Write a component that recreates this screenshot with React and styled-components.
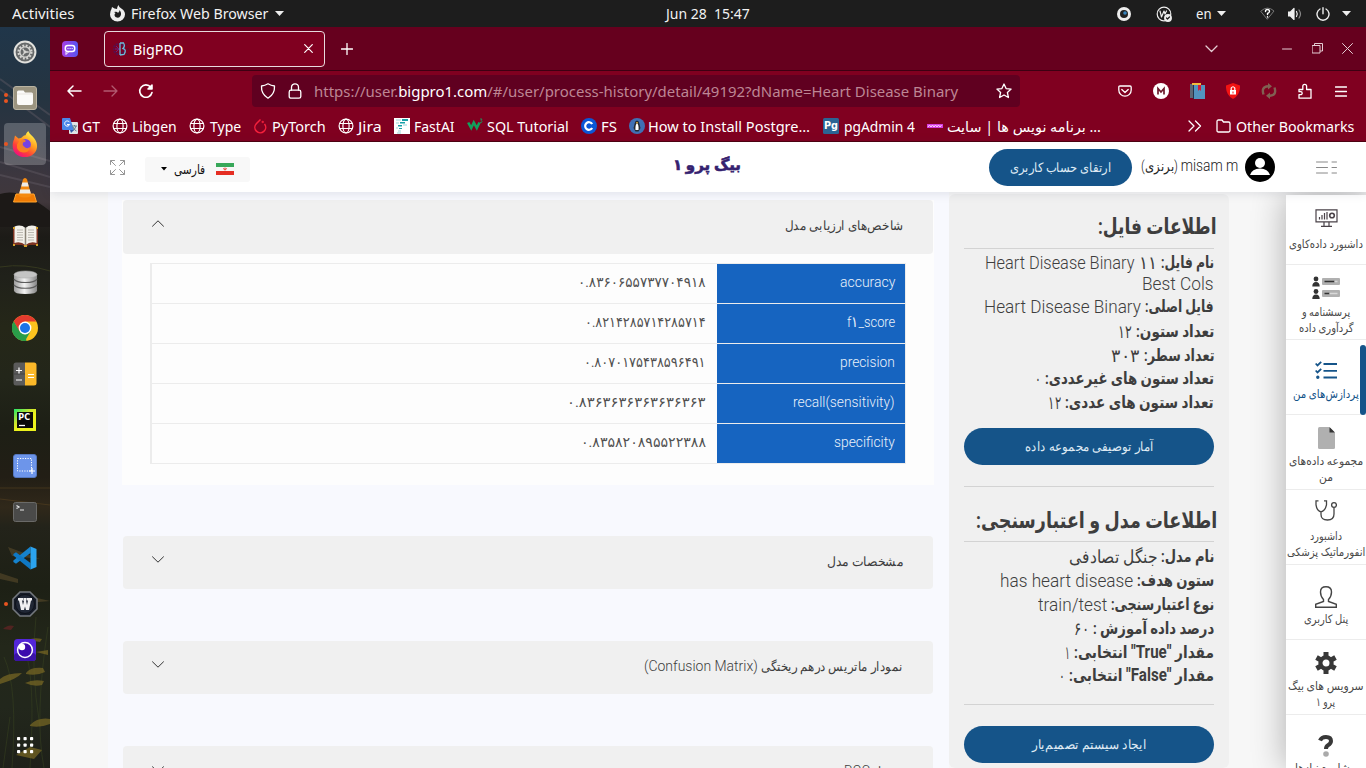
import React, { useLayoutEffect, useRef, useState } from "react";
import styled, { createGlobalStyle } from "styled-components";

const Global = createGlobalStyle`
  * { box-sizing: border-box; }
  html, body { margin: 0; width: 1366px; height: 768px; overflow: hidden; }
  body { font-family: "Noto Sans", "DejaVu Sans", sans-serif; background: #f7f7f7; }
  svg { display: block; flex: none; }
`;

/* ---------- text fitted to a given width ---------- */
const FitBox = styled.span`
  display: inline-flex;
  flex: none;
  width: ${(p) => p.$w}px;
  white-space: pre;
  direction: ${(p) => (p.$rtl ? "rtl" : "ltr")};
`;
const FitInner = styled.span`
  display: inline-block;
  flex: none;
  transform-origin: ${(p) => (p.$rtl ? "100% 50%" : "0 50%")};
`;
function Fit({ w, rtl, children }) {
  const ref = useRef(null);
  const [scale, setScale] = useState(1);
  useLayoutEffect(() => {
    setScale(w / ref.current.offsetWidth);
  }, [w, children]);
  return (
    <FitBox $w={w} $rtl={rtl}>
      <FitInner ref={ref} $rtl={rtl} style={{ transform: `scaleX(${scale})` }}>{children}</FitInner>
    </FitBox>
  );
}
/* Latin words inside Persian text */
const Latin = styled.span`
  font-size: ${(p) => p.$size || 1.18}em;
  line-height: 0;
`;

/* ---------- desktop ---------- */
const Desktop = styled.div`
  width: 1366px;
  height: 768px;
  display: flex;
  flex-direction: column;
  overflow: hidden;
`;
const TopBar = styled.div`
  height: 27px;
  flex: none;
  display: flex;
  align-items: center;
  background: #1d1d1d;
  color: #f2f2f2;
  font-size: 14px;
  line-height: 27px;
  padding-left: 12px;
`;
const Gap = styled.span`
  flex: none;
  width: ${(p) => p.$w}px;
`;
const Below = styled.div`
  flex: 1;
  display: flex;
  min-height: 0;
`;

/* ---------- dock ---------- */
const Dock = styled.div`
  width: 50px;
  flex: none;
  position: relative;
  display: flex;
  flex-direction: column;
  padding-top: 2px;
  overflow: hidden;
  background: linear-gradient(#20364a 0, #253441 70px, #2e3440 110px, #3d373f 150px, #40373b 175px, #23201d 195px, #1c1b17 210px, #20211a 250px, #252718 300px, #23261a 350px, #1d1f15 400px, #221e15 450px, #30281a 480px, #23231a 500px, #1d2015 560px, #23271a 620px, #22271c 680px, #1e2019 741px);
`;
const Wallpaper = styled.svg`
  position: absolute;
  inset: 0;
`;
const DockItem = styled.div`
  height: 46px;
  flex: none;
  position: relative;
  display: flex;
  align-items: center;
  justify-content: center;
  margin-top: ${(p) => (p.$bottom ? "auto" : "0")};
  &::before {
    content: "";
    position: absolute;
    inset: 2px 4px;
    border-radius: 4px;
    background: ${(p) => (p.$active ? "rgba(255,255,255,.22)" : "transparent")};
  }
  svg { position: relative; }
`;
const Dots = styled.span`
  position: absolute;
  left: 4px;
  top: 21px;
  width: 4px;
  display: flex;
  flex-direction: column;
  gap: 2px;
  margin-top: ${(p) => (p.$two ? "-3px" : "0")};
  i { width: 4px; height: 4px; border-radius: 2px; background: #e95420; }
`;

const DockIcons = {
  settings: (
    <svg width="24" height="24" viewBox="0 0 26 26">
      <circle cx="13" cy="13" r="11.3" fill="#66696a" stroke="#e2e2de" strokeWidth="2.2" />
      <circle cx="13" cy="13" r="7" fill="none" stroke="#d5d5d2" strokeWidth="2.4" strokeDasharray="2 1.66" />
      <circle cx="13" cy="13" r="5.6" fill="none" stroke="#d5d5d2" strokeWidth="1.5" />
      <path d="M13 13h4M13 13l-2.5-3.6M13 13l-2.5 3.6" stroke="#d5d5d2" strokeWidth="1.4" />
      <circle cx="13" cy="13" r="1.6" fill="#d5d5d2" />
    </svg>
  ),
  files: (
    <svg width="24" height="24" viewBox="0 0 24 24">
      <rect x=".5" y=".5" width="23" height="23" rx="2.5" fill="#9b9480" stroke="#b9b3a1" />
      <path d="M4 6q0-1.5 1.500-1.500h5l1.500 2h6.500q1.500 0 1.500 1.500v9q0 2-2 2h-12q-2 0-2-2z" fill="#fbfaf8" />
      <path d="M4 8h16" stroke="#ddd9d0" strokeWidth=".6" />
    </svg>
  ),
  firefox: (
    <svg width="26" height="26" viewBox="0 0 26 26">
      <defs>
        <linearGradient id="ffa" x1=".8" y1=".1" x2=".25" y2=".95">
          <stop offset="0" stopColor="#fff14a" /><stop offset=".4" stopColor="#ff9a1e" /><stop offset=".72" stopColor="#ff4138" /><stop offset="1" stopColor="#f0117c" />
        </linearGradient>
      </defs>
      <path d="M16.500.5c1 2.500 3.500 4 5.500 6.500 4 5 4 11 .5 15-5 5.500-14 5.500-19 .5C0 19 0 12.500 2 8.500l1-4 3.500 3 2.500-.5 3-2.500q2 0 2-1.500 1-2 2.500-3z" fill="url(#ffa)" />
      <circle cx="13.300" cy="13.500" r="5.600" fill="#7542e5" />
      <path d="M8 9q4-2 6 1-1 1-3 1.500-1 2 1 4 3 3 6 .5-1 6-7 5.500-7-1-6-8z" fill="#ff8a16" opacity=".85" />
    </svg>
  ),
  vlc: (
    <svg width="24" height="26" viewBox="0 0 24 26">
      <path d="M3 17h18l2.500 8H.5z" fill="#f07c05" stroke="#ffa52f" />
      <path d="M12 1q1.500 0 2 1.500L18.500 19q-6.500 3-13 0L10 2.500Q10.500 1 12 1z" fill="#f58a10" />
      <path d="M9.300 5.500h5.400l1 4H8.300zM7.200 12.500h9.600l1 4H6.200z" fill="#eeece8" />
    </svg>
  ),
  book: (
    <svg width="27" height="24" viewBox="0 0 27 24">
      <path d="M1 4h25v17h-9l-3.500 2-3.500-2H1z" fill="#7d3322" />
      <path d="M2.500 2.500Q9 0 13.500 4 18 0 24.500 2.500V19q-6-2-11 2-5-4-11-2z" fill="#f2f0ea" />
      <path d="M13.500 4v17" stroke="#8b8579" strokeWidth="1.500" />
      <path d="M5 6h6M5 8.500h6M5 11h6M5 13.500h6M5 16h6M16 6h6M16 8.500h6M16 11h6M16 13.500h6M16 16h6" stroke="#b4b1aa" strokeWidth=".9" />
      <path d="M1 4h2M1 21h2M24 4h2M24 21h2M12 22h3" stroke="#d2a12d" strokeWidth="2" />
    </svg>
  ),
  db: (
    <svg width="25" height="25" viewBox="0 0 26 26">
      <defs><linearGradient id="dbg"><stop offset="0" stopColor="#9c9c9c" /><stop offset=".45" stopColor="#f3f3f3" /><stop offset="1" stopColor="#858585" /></linearGradient></defs>
      <path d="M1 5v16q0 4 12 4t12-4V5z" fill="url(#dbg)" />
      <ellipse cx="13" cy="4.700" rx="12" ry="3.700" fill="#c4c4c4" stroke="#aaa" strokeWidth=".6" />
      <path d="M1 9.500q2 3.500 12 3.500t12-3.500M1 15.500Q3 19 13 19t12-3.500" fill="none" stroke="#5d5d5d" strokeWidth="1.200" />
    </svg>
  ),
  chrome: (
    <svg width="26" height="26" viewBox="0 0 26 26">
      <circle cx="13" cy="13" r="13" fill="#fcc31e" />
      <path d="M13 26A13 13 0 0 1 1.740 6.500L7.400 16.200 13 19.500l1.500 6.400z" fill="#2a9d49" />
      <path d="M1.740 6.500A13 13 0 0 1 24.260 6.500H13L7.400 16.200z" fill="#e33b2e" />
      <path d="M1.740 6.500L7.400 16.200q2 3.300 5.600 3.300l5.600-3.200L13 26A13 13 0 0 1 1.740 6.500z" fill="#2a9d49" />
      <circle cx="13" cy="13" r="6.400" fill="#fff" /><circle cx="13" cy="13" r="5" fill="#1b74e8" />
    </svg>
  ),
  calc: (
    <svg width="24" height="24" viewBox="0 0 24 24">
      <path d="M3 .5h9v23H3Q.5 23.500.5 21V3Q.5.5 3 .5z" fill="#5b5b5b" />
      <path d="M12 .5h9q2.500 0 2.500 2.500v18q0 2.500-2.500 2.500h-9z" fill="#fbb829" />
      <path d="M.5 12H12" stroke="#444" />
      <path d="M3 8.500h6M6 5.500v6M3 18h6M15 12.500h6M15 15.500h6" stroke="#fff" strokeWidth="1.200" />
    </svg>
  ),
  pycharm: (
    <svg width="22" height="22" viewBox="0 0 22 22">
      <defs><linearGradient id="pcg" x2=".5" y2=".6"><stop offset="0" stopColor="#21e66b" /><stop offset=".7" stopColor="#cfe52c" /><stop offset="1" stopColor="#ecf21d" /></linearGradient></defs>
      <rect width="22" height="22" fill="url(#pcg)" /><rect x="3" y="3" width="16" height="16" fill="#0a0a0a" />
      <path d="M5 16.500h6" stroke="#fff" strokeWidth="1.300" />
      <text x="4.300" y="11" fontSize="8" fontWeight="700" fill="#fff" fontFamily="DejaVu Sans">PC</text>
    </svg>
  ),
  shot: (
    <svg width="24" height="24" viewBox="0 0 24 24">
      <rect x=".5" y=".5" width="23" height="23" rx="2.500" fill="#6d95ea" stroke="#5476bd" />
      <rect x="4.500" y="4.500" width="14" height="12.500" fill="none" stroke="#fff" strokeDasharray="1.200 1.300" />
      <path d="M16 17h6M19 14v6" stroke="#fff" strokeWidth="1.200" />
    </svg>
  ),
  term: (
    <svg width="24" height="20" viewBox="0 0 24 20">
      <rect x=".5" y=".5" width="23" height="19" rx="2" fill="#4a4a49" stroke="#6a6a68" />
      <path d="M3.500 3.500L6 5 3.500 6.500M7 8h4" fill="none" stroke="#e8e8e8" strokeWidth="1.200" />
    </svg>
  ),
  code: (
    <svg width="24" height="24" viewBox="0 0 24 24">
      <path d="M17.500.5v6.500L3 17.800.4 16V14.500z" fill="#1683cd" />
      <path d="M.4 8L3 6.200 17.500 17v6.500L.4 9.500z" fill="#0f78c4" />
      <path d="M17.500.5L23.500 3v18l-6 2.500z" fill="#2ba3ee" />
    </svg>
  ),
  wapp: (
    <svg width="26" height="26" viewBox="0 0 26 26">
      <path d="M8 1h10l7 7v10l-7 7H8l-7-7V8z" fill="#161c28" stroke="#73777d" strokeWidth="1.600" />
      <circle cx="13" cy="13" r="9.500" fill="#202735" stroke="#0d1119" />
      <path d="M6 7h5v2.500h-1L11 14l1-4h-.6V7h3.200v2.500H14l1 4.500 1-4.500h-1V7h5v2.500h-1L17 19h-3l-1-3.500-1 3.500H9L7 9.500H6z" fill="#f0f0f2" />
    </svg>
  ),
  purple: (
    <svg width="22" height="22" viewBox="0 0 22 22">
      <rect width="22" height="22" rx="3.500" fill="#5326d8" /><rect y="14" width="22" height="8" rx="3.500" fill="#3b13a7" />
      <circle cx="11" cy="11" r="7.400" fill="#3b0bad" stroke="#fff" strokeWidth="1.500" />
      <circle cx="8" cy="8" r="3.200" fill="#fff" />
    </svg>
  ),
  apps: (
    <svg width="18" height="18" viewBox="0 0 18 18" fill="#fff">
      {[1, 7.500, 14].map((y) => [1, 7.500, 14].map((x) => <rect key={`${x}-${y}`} x={x} y={y} width="3.200" height="3.200" rx=".8" />))}
    </svg>
  ),
};
const dockItems = [
  ["settings"], ["files", 2], ["firefox", 1, true], ["vlc"], ["book"], ["db"], ["chrome"], ["calc"],
  ["pycharm"], ["shot"], ["term"], ["code"], ["wapp", 1], ["purple"],
];
function DockBar() {
  return (
    <Dock>
      <Wallpaper width="50" height="741" viewBox="0 0 50 741">
        <g stroke="#66606a" strokeWidth="2" opacity=".4" fill="none">
          <path d="M0 52L50 88M0 62L50 100M0 120L50 134M0 135L50 150M0 148L50 160" />
        </g>
        <path d="M0 167Q20 160 50 184V200H0z" fill="#1c1917" />
        <path d="M0 240Q25 236 50 244" stroke="#35381f" fill="none" />
        <path d="M0 461H50M0 472L50 478" stroke="#554020" opacity=".6" />
        <g stroke="#36401f" fill="none" opacity=".6">
          <path d="M12 741Q18 660 4 630M30 741Q36 650 24 620M44 741Q34 690 48 600M3 741L10 690M40 700Q30 640 36 590" />
        </g>
        <g fill="#7b6a24" opacity=".7">
          <path d="M0 808q8-8 22-7-5 7-22 12z" />
          <path d="M0 652q6-6 22-6-5 6-22 11zM26 646q4-6 17-5l2 4q-8 4-19 2zM25 656q8-4 19-2l-2 4q-8 2-17-2zM30 698q8-8 20-6v5q-10 4-20 2zM28 613q6-3 14-1l-2 3zM36 625l12-2v5zM16 728l14-8 12 3-8 9z" />
        </g>
        <g fill="#756034" opacity=".4"><path d="M0 546l18 6v4L0 552zM8 520l32 12-28-3zM24 568l26 6-22 2z" /></g>
        <path d="M3 602q5-5 11-3l-3 4z" fill="#712326" opacity=".6" />
      </Wallpaper>
      {dockItems.map(([name, dots, active]) => (
        <DockItem key={name} $active={active}>
          {dots && <Dots $two={dots === 2}><i />{dots === 2 && <i />}</Dots>}
          {DockIcons[name]}
        </DockItem>
      ))}
      <DockItem $bottom>{DockIcons.apps}</DockItem>
    </Dock>
  );
}

/* ---------- browser ---------- */
const Browser = styled.div`
  flex: 1;
  min-width: 0;
  display: flex;
  flex-direction: column;
  color: #fff;
  font-size: 14px;
`;
const TabStrip = styled.div`
  height: 44px;
  flex: none;
  display: flex;
  align-items: center;
  background: #66001e;
  border-bottom: 1px solid #3d0012;
  padding-left: 12px;
`;
const Tab = styled.div`
  width: 221px;
  height: 36px;
  flex: none;
  display: flex;
  align-items: center;
  padding-left: 8px;
  gap: 4px;
  background: #800020;
  border: 1px solid #e8dadd;
  border-radius: 4px;
  > span { padding-top: 2px; }
`;
const NavBar = styled.div`
  height: 40px;
  flex: none;
  display: flex;
  align-items: center;
  background: #800020;
  padding-left: 16px;
`;
const UrlBox = styled.div`
  width: 768px;
  height: 32px;
  flex: none;
  display: flex;
  align-items: center;
  padding-left: 8px;
  border-radius: 4px;
  background: #600020;
  color: #bd8694;
  font-size: 15px;
  b { font-weight: 400; color: #fff; }
`;
const Bookmarks = styled.div`
  height: 31px;
  flex: none;
  display: flex;
  align-items: center;
  background: #800020;
  border-bottom: 1px solid #50000f;
  padding-left: 12px;
`;
const Bookmark = styled.div`
  flex: none;
  display: flex;
  align-items: center;
  gap: ${(p) => p.$gap}px;
  margin-right: ${(p) => p.$after}px;
`;

const Globe = () => (
  <svg width="16" height="16" viewBox="0 0 16 16" fill="none" stroke="#fff" strokeWidth="1.200">
    <circle cx="8" cy="8" r="6.900" /><ellipse cx="8" cy="8" rx="3.100" ry="6.900" /><path d="M1.500 5.500h13M1.500 10.500h13" />
  </svg>
);
const bookmarkIcons = {
  gt: (
    <svg width="16" height="16" viewBox="0 0 16 16">
      <rect x="7" y="4" width="9" height="12" rx="1" fill="#dfe3e6" /><path d="M0 1q0-1 1-1h7l4 12H1q-1 0-1-1z" fill="#4a86e8" />
      <path d="M7.500 4.200A2.600 2.600 0 1 0 7.700 6.500H5" stroke="#fff" fill="none" /><path d="M10 8h5M12.500 7v1M14 8q-1 4-4 5M11 9q1 3 3.500 4" stroke="#607d8b" fill="none" /><path d="M8 12h4l-3 3z" fill="#3056a5" />
    </svg>
  ),
  globe: <Globe />,
  torch: (
    <svg width="15" height="16" viewBox="0 0 15 16" fill="none" stroke="#f5203c" strokeWidth="1.500">
      <path d="M7.500 1.500L3.300 5.700a5.400 5.400 0 1 0 8.200.3" /><circle cx="9.700" cy="4" r=".4" />
    </svg>
  ),
  fast: (
    <svg width="16" height="16" viewBox="0 0 16 16">
      <rect width="16" height="16" fill="#fff" /><path d="M8 1h6v2H8zM6 4h5v1.500H6zM4 7h4v1.500H4zM5 10h3v1H5z" fill="#18a0a8" /><path d="M2 2h5M2 5h3M9 7h4M2 10h2M4 13h3M3 15h4" stroke="#98d8da" strokeWidth="1.200" />
    </svg>
  ),
  w3: (
    <svg width="16" height="16" viewBox="0 0 16 16" fill="none">
      <path d="M1.200 4.500l3 5.500 2.600-5.500 3 5.500L12.500 4.500" stroke="#12a05c" strokeWidth="2.600" /><path d="M13 1h2l-1 1.500q2 .5.500 2H13" stroke="#12a05c" strokeWidth=".8" />
    </svg>
  ),
  fs: (
    <svg width="16" height="16" viewBox="0 0 16 16"><circle cx="8" cy="8" r="8" fill="#0b57d6" /><path d="M11.200 6A3.800 3.800 0 1 0 11.200 10" fill="none" stroke="#fff" strokeWidth="2.200" /></svg>
  ),
  pen: (
    <svg width="16" height="16" viewBox="0 0 16 16"><circle cx="8" cy="8" r="8" fill="#4070b4" /><path d="M8 2.500q2 0 2.200 2.500l1.300 5-2 3.500h-3l-2-3.500 1.300-5Q6 2.500 8 2.500z" fill="#242b33" /><path d="M8 5q2 2 1.500 7h-3Q6 7 8 5z" fill="#fff" /><path d="M7 4h2l-1 2z" fill="#f2b32b" /></svg>
  ),
  pg: (
    <svg width="16" height="16" viewBox="0 0 16 16"><rect width="16" height="16" rx="1.500" fill="#2b6494" /><text x="1" y="11" fontSize="10" fontWeight="700" fill="#fff" fontFamily="DejaVu Sans" textLength="14" lengthAdjust="spacingAndGlyphs">Pg</text></svg>
  ),
  pink: (
    <svg width="16" height="16" viewBox="0 0 16 16"><path d="M0 6h16v4H0z" fill="#d63de0" /><path d="M1 9l1.500-2L4 9l1.500-2L7 9l1.500-2L10 9l1.500-2L13 9l1.500-2" stroke="#ffd7ff" fill="none" /></svg>
  ),
};
const bookmarks = [
  ["gt", 4, "GT", 18, 12], ["globe", 4, "Libgen", 45, 12], ["globe", 5, "Type", 31, 12], ["torch", 4, "PyTorch", 54, 12],
  ["globe", 4, "Jira", 24, 12], ["fast", 4, "FastAI", 41, 12], ["w3", 4, "SQL Tutorial", 82, 12], ["fs", 4, "FS", 16, 12],
  ["pen", 3, "How to Install Postgre…", 162, 13], ["pg", 5, "pgAdmin 4", 71, 12], ["pink", 4, "برنامه نویس ها | سایت …", 154, 87],
];

const Svg = styled.svg`
  margin-right: ${(p) => p.$after || 0}px;
  fill: none;
  stroke: ${(p) => p.$color || "#fff"};
  stroke-width: ${(p) => p.$sw || 1.3};
  stroke-linecap: round;
  stroke-linejoin: round;
`;

/* ---------- site ---------- */
const Site = styled.div`
  flex: 1;
  min-height: 0;
  display: flex;
  flex-direction: column;
  background: #f7f7f7;
  color: #3e3e3e;
  font-family: Roboto, "DejaVu Sans", sans-serif;
`;
const SiteHeader = styled.header`
  height: 50px;
  flex: none;
  display: flex;
  align-items: center;
  position: relative;
  z-index: 2;
  background: #fff;
  box-shadow: 0 1px 10px rgba(40, 45, 80, 0.13);
  padding-left: 60px;
  font-size: 14px;
`;
const LangButton = styled.div`
  width: 105px;
  height: 25px;
  margin: 4px 423px 0 20px;
  padding-left: 16px;
  display: flex;
  align-items: center;
  border-radius: 3px;
  background: #f8f8f8;
  color: #111;
  font-size: 13px;
`;
const Logo = styled.div`
  width: 68px;
  margin-right: 248px;
  color: #35216f;
  font-size: 15px;
  font-weight: 900;
  line-height: 20px;
  margin-top: -4px;
  -webkit-text-stroke: 0.6px #35216f;
`;
const Pill = styled.button`
  width: ${(p) => p.$w}px;
  height: 37px;
  flex: none;
  padding: 0;
  border: 0;
  border-radius: 19px;
  display: flex;
  align-items: center;
  justify-content: center;
  background: #155489;
  color: #dfeaf4;
  font: 300 13px Roboto, "DejaVu Sans", sans-serif;
  margin: ${(p) => p.$m || "0"};
`;
const User = styled.div`
  margin: -2px 7px 0 9px;
  font-size: 14px;
  font-weight: 300;
  color: #222;
`;
const SiteBody = styled.div`
  flex: 1;
  min-height: 0;
  display: flex;
  overflow: hidden;
`;
const Main = styled.main`
  width: 841px;
  flex: none;
  margin-left: 58px;
  padding: 8px 15px 0 14px;
  display: flex;
  flex-direction: column;
  background: #f8f9fe;
  overflow: hidden;
`;
const Accordion = styled.section`
  flex: none;
  margin-bottom: ${(p) => p.$after}px;
  background: ${(p) => (p.$open ? "#fdfdfd" : "transparent")};
  height: ${(p) => p.$h}px;
`;
const AccHead = styled.div`
  height: ${(p) => (p.$open ? 54 : 53)}px;
  margin: 0 1px;
  padding: 0 30px 0 29px;
  display: flex;
  align-items: center;
  justify-content: space-between;
  border-radius: 4px;
  background: #f0f0f0;
  font-size: 13px;
  font-weight: 300;
  > svg { margin-top: -7px; }
  > span { margin-top: -3px; }
`;
const Table = styled.div`
  width: 756px;
  margin: 9px 0 0 28px;
  border: 1px solid #ececec;
  border-left-width: 2px;
  border-bottom: 0;
`;
const Row = styled.div`
  height: 40.1px;
  display: flex;
  direction: rtl;
  border-bottom: 1px solid #ececec;
`;
const Key = styled.div`
  width: 188px;
  padding-right: 10px;
  display: flex;
  align-items: center;
  background: #1664c0;
  color: #eaf1fa;
  font-size: 14.500px;
  font-weight: 300;
  padding-bottom: 2px;
`;
const Value = styled.div`
  flex: 1;
  padding: 0 11px 3px 0;
  display: flex;
  align-items: center;
  font-size: 14px;
  color: #505050;
`;
const Info = styled.aside`
  width: 280px;
  flex: none;
  margin-top: 2px;
  padding: 0 15px;
  direction: rtl;
  border-radius: 6px;
  background: #f0f0f0;
  overflow: hidden;
`;
const InfoTitle = styled.h3`
  margin: 0 -3px;
  height: ${(p) => p.$h}px;
  padding-top: ${(p) => p.$pt}px;
  font-size: 22px;
  line-height: 26px;
  font-weight: 700;
`;
const InfoSpace = styled.div`
  height: 21px;
`;
const Rule = styled.hr`
  height: 1px;
  border: 0;
  margin: 0;
  background: #d3d3d3;
`;
const Lines = styled.div`
  height: ${(p) => p.$h}px;
  padding-top: ${(p) => p.$pt}px;
`;
const Line = styled.div`
  height: ${(p) => p.$h || 23.8}px;
  display: flex;
  align-items: center;
  gap: 4px;
  font-size: 16.500px;
  line-height: 22px;
  b { font-weight: 700; }
  i { font-style: normal; font-weight: 300; font-size: 17.500px; }
`;
const Side = styled.nav`
  width: 80px;
  flex: none;
  margin: 3px 0 0 57px;
  display: flex;
  flex-direction: column;
  background: #fff;
  box-shadow: 0 0 34px rgba(0, 0, 0, 0.3);
`;
const SideItem = styled.div`
  height: ${(p) => p.$h || 75}px;
  flex: none;
  position: relative;
  padding-top: ${(p) => p.$top}px;
  display: flex;
  flex-direction: column;
  align-items: center;
  border-bottom: 1px solid #ececec;
  color: ${(p) => (p.$active ? "#155489" : "#4a4a4a")};
  font-size: 11.500px;
  line-height: 16px;
  svg { margin-bottom: ${(p) => p.$gap}px; }
`;
const ActiveBar = styled.span`
  position: absolute;
  right: 0;
  top: 5px;
  width: 6px;
  height: 70px;
  border-radius: 3px;
  background: #155489;
`;

const metrics = [
  ["accuracy", 55, "۰.۸۳۶۰۶۵۵۷۳۷۷۰۴۹۱۸", 128],
  ["f۱_score", 48, "۰.۸۲۱۴۲۸۵۷۱۴۲۸۵۷۱۴", 121],
  ["precision", 55, "۰.۸۰۷۰۱۷۵۴۳۸۵۹۶۴۹۱", 122],
  ["recall(sensitivity)", 102, "۰.۸۳۶۳۶۳۶۳۶۳۶۳۶۳۶۳", 139],
  ["specificity", 61, "۰.۸۳۵۸۲۰۸۹۵۵۲۲۳۸۸", 125],
];
const fileInfo = [
  ["نام فایل:", 53, "Heart Disease Binary ۱۱", 172, 22.5],
  [null, 0, "Best Cols", 72, 20],
  ["فایل اصلی:", 69, "Heart Disease Binary", 157, 26],
  ["تعداد ستون:", 78, "۱۲", 14],
  ["تعداد سطر:", 70, "۳۰۳", 29],
  ["تعداد ستون های غیرعددی:", 169, "۰", 6],
  ["تعداد ستون های عددی:", 149, "۱۲", 13],
];
const modelInfo = [
  ["نام مدل:", 53, "جنگل تصادفی", 88, 0, true],
  ["ستون هدف:", 77, "has heart disease", 133],
  ["نوع اعتبارسنجی:", 103, "train/test", 69],
  ["درصد داده آموزش :", 121, "۶۰", 15],
  [<>مقدار <Latin $size={1.1}>"True"</Latin> انتخابی:</>, 140, "۱", 5],
  [<>مقدار <Latin $size={1.1}>"False"</Latin> انتخابی:</>, 145, "۰", 6],
];
const InfoLines = ({ rows, h, pt }) => (
  <Lines $h={h} $pt={pt}>
    {rows.map(([label, lw, value, vw, lh, rtl], i) => (
      <Line key={i} $h={lh}>
        {label && <b><Fit w={lw} rtl>{label}</Fit></b>}
        <i><Fit w={vw} rtl={rtl}>{value}</Fit></i>
      </Line>
    ))}
  </Lines>
);
const Chevron = ({ up }) => (
  <Svg width="12" height="7" viewBox="0 0 12 7" $color="#333" $sw="1">
    <path d={up ? "M.5 6.200L6 .8l5.500 5.400" : "M.5.8L6 6.200 11.500.8"} />
  </Svg>
);

const sideIcons = {
  board: (
    <svg width="23" height="18" viewBox="0 0 23 18" fill="none" stroke="#4a4248" strokeWidth="1.200">
      <path d="M1 .8h21v12H1zM9 13v4M14 13v4M6 17.300h11" /><path d="M4.500 10.500V8M7 10.500V6M9.500 10.500V4M12 10.500V3" /><circle cx="17" cy="6.500" r="2.300" strokeWidth="1.600" />
    </svg>
  ),
  survey: (
    <svg width="28" height="24" viewBox="0 0 28 24">
      <g fill="#333"><circle cx="4" cy="3" r="2.400" /><path d="M.3 10.500q0-4.500 3.700-4.500t3.700 4.500zM.3 23q0-4.500 3.700-4.500T7.700 23z" /><circle cx="4" cy="15.500" r="2.400" /></g>
      <rect x="10" y="2" width="18" height="7" rx="1" fill="#b0b0b0" /><rect x="10" y="14" width="18" height="7" rx="1" fill="#b0b0b0" />
      <path d="M12.500 5.500h10M12.500 17.500h5" stroke="#333" strokeWidth="1.600" />
      <path d="M22.500 5.500h3M17.500 17.500h8" stroke="#d8d8d8" strokeWidth="1.600" />
    </svg>
  ),
  tasks: (
    <svg width="22" height="18" viewBox="0 0 22 18" fill="none" stroke="#155489" strokeWidth="1.800">
      <path d="M.7 2.500L2.500 4.500 6.200.8M.7 9.500l1.800 2 3.700-3.700M8.500 3H22M8.500 9.800H22M8.500 16.500H22" /><circle cx="2.800" cy="16.300" r=".8" />
    </svg>
  ),
  file: (
    <svg width="17" height="22" viewBox="0 0 17 22"><path d="M1.500 0H11l6 6v14.500q0 1.500-1.500 1.500h-14Q0 22 0 20.500v-19Q0 0 1.500 0z" fill="#b0b0b0" /><path d="M11.500 0L17 5.500h-5.500z" fill="#333" /></svg>
  ),
  steth: (
    <svg width="22" height="21" viewBox="0 0 22 21" fill="none" stroke="#444" strokeWidth="1.300">
      <path d="M3.500.8H1v4q1 6.500 5 7 4-.5 5.500-7v-4H9M6 12v2.500q0 5.500 6.500 5.500t6.500-6V7.500" /><circle cx="19" cy="5" r="2.400" />
    </svg>
  ),
  user: (
    <svg width="22" height="22" viewBox="0 0 22 22" fill="none" stroke="#444" strokeWidth="1.400"><path d="M8.500 13.500Q5.500 10.500 5.500 6q0-5.200 5.500-5.200T16.500 6q0 4.500-3 7.500v2l7.800 2.800v3H.7v-3l7.800-2.800z" /></svg>
  ),
  gear: (
    <svg width="22" height="22" viewBox="0 0 22 22" fill="none" stroke="#383838"><circle cx="11" cy="11" r="5.600" strokeWidth="4.200" /><path d="M11 0v4M11 18v4M1.500 5.500l3.500 2M17 14.500l3.500 2M1.500 16.500l3.500-2M17 7.500l3.500-2" strokeWidth="5" /></svg>
  ),
  help: (
    <svg width="16" height="22" viewBox="0 0 16 22"><path d="M2 5.500Q3.500 2 8 2q5 0 5 4 0 2.500-3 4.200-2 1.200-2 3.800" fill="none" stroke="#383838" strokeWidth="4" /><circle cx="8" cy="19" r="2.800" fill="#aaa" /></svg>
  ),
};
const sideItems = [
  { icon: "board", top: 14, gap: 9, h: 70, lines: [["داشبورد داده‌کاوی", 74]] },
  { icon: "survey", top: 11, gap: 4, lines: [["پرسشنامه و", 48], ["گردآوری داده", 55]] },
  { icon: "tasks", top: 21, gap: 7, active: true, lines: [["پردازش‌های من", 66]] },
  { icon: "file", top: 12, gap: 4, lines: [["مجموعه داده‌های", 74], ["من", 14]] },
  { icon: "steth", top: 10, gap: 7, lines: [["داشبورد", 32], ["انفورماتیک پزشکی", 78]] },
  { icon: "user", top: 21, gap: 3, lines: [["پنل کاربری", 44]] },
  { icon: "gear", top: 12, gap: 4, lines: [["سرویس های بیگ", 76], ["پرو ۱", 19]] },
  { icon: "help", top: 20, gap: 3, lines: [["مشاوره نیازها", 61]] },
];

const CaretDown = () => (
  <svg width="9" height="5" viewBox="0 0 9 5" fill="#eee"><path d="M0 0h9L4.500 5z" /></svg>
);

export default function App() {
  return (
    <Desktop>
      <Global />
      <TopBar>
        <Fit w={62}>Activities</Fit>
        <Gap $w={35} />
        <svg width="17" height="17" viewBox="0 0 17 17"><path d="M9.500 0q0 2 3.500 4 3 2 3 5.500a7.500 7 0 0 1-15 0Q1 6 2.500 4l.5-2 2.500 1.500L8 4Q8 2 9.500 0z" fill="#eee" /><path d="M5 7q3-1 4 1 2-2 1.500-3 2.500 3 1 6t-5 1q-2-2 0-4z" fill="#1d1d1d" /></svg>
        <Gap $w={5} />
        <Fit w={137}>Firefox Web Browser</Fit>
        <Gap $w={7} />
        <CaretDown />
        <Gap $w={382} />
        <Fit w={84}>Jun 28  15:47</Fit>
        <Gap $w={367} />
        <svg width="14" height="14" viewBox="0 0 14 14"><circle cx="7" cy="7" r="7" fill="#eee" /><circle cx="7" cy="7" r="4" fill="#222" /><circle cx="8" cy="6" r="1.800" fill="#3784bd" /></svg>
        <Gap $w={25} />
        <Svg width="16" height="16" viewBox="0 0 16 16" $color="#eee" $sw="1.200"><circle cx="8" cy="8" r="6.800" /><path d="M4 5l1.500 6L8 5l1 3 1.500-3" /><circle cx="12" cy="12" r="3.300" fill="#eee" /><path d="M10.500 12l1 1 2-2" stroke="#1d1d1d" /></Svg>
        <Gap $w={24} />
        <Fit w={16}>en</Fit>
        <Gap $w={5} />
        <CaretDown />
        <Gap $w={34} />
        <Svg width="15" height="13" viewBox="0 0 15 13" $color="#777" $sw="1"><path d="M1 4Q7.500-2 14 4L7.500 12z" /><path d="M5.500 4.500q0-2 2-2t2 2q0 1-2 2v1M7.500 9.800v.2" stroke="#fff" strokeWidth="1.400" /></Svg>
        <Gap $w={13} />
        <Svg width="14" height="14" viewBox="0 0 14 14" $color="#eee" $sw="1.200"><path d="M.5 5h2L6 1.500v11L2.500 9h-2z" fill="#eee" /><path d="M8.500 4.500q1.500 2.500 0 5" /><path d="M11 3q3 4 0 8" stroke="#888" /></Svg>
        <Gap $w={14} />
        <Svg width="14" height="14" viewBox="0 0 14 14" $color="#eee" $sw="1.400"><path d="M4 2a6 6 0 1 0 6 0M7 .7v6" /></Svg>
        <Gap $w={12} />
        <CaretDown />
      </TopBar>
      <Below>
        <DockBar />
        <Browser>
          <TabStrip>
            <svg width="16" height="16" viewBox="0 0 16 16"><defs><linearGradient id="pin" x2="1"><stop offset="0" stopColor="#a93ee5" /><stop offset="1" stopColor="#5555ef" /></linearGradient></defs><rect width="16" height="16" rx="4" fill="url(#pin)" /><rect x="3.300" y="4.500" width="9.400" height="6" rx="2.500" fill="none" stroke="#fff" strokeWidth="1.500" /><path d="M5.500 7.500h1M7.600 7.500h1M9.700 7.500h1M4 11v2.500l3-3" stroke="#fff" fill="none" /></svg>
            <Gap $w={26} />
            <Tab>
              <svg width="16" height="16" viewBox="0 0 16 16" fill="none"><circle cx="6" cy="8" r="5.300" stroke="#54104f" strokeWidth="2" strokeDasharray="2 1" /><path d="M2 8h5M3 5l3 3-3 3" stroke="#6c2180" /><path d="M7 2v12M7 2h3.500q2 3-.5 5.500 4 1 1 6L7 14" stroke="#68bddb" strokeWidth="1.300" /><path d="M13 4l2-1M13 12l2 2M14 8h2" stroke="#4b1730" /></svg>
              <Fit w={50}>BigPRO</Fit>
              <Gap $w={113} />
              <Svg width="9" height="9" viewBox="0 0 9 9" $sw="1.200"><path d="M.7.7l7.600 7.600M8.300.7L.7 8.300" /></Svg>
            </Tab>
            <Gap $w={16} />
            <Svg width="12" height="12" viewBox="0 0 12 12" $after={852}><path d="M6 .5v11M.5 6h11" /></Svg>
            <Svg width="13" height="8" viewBox="0 0 13 8" $after={64} $color="#e5cdd4"><path d="M1 1l5.500 5.500L12 1" /></Svg>
            <Svg width="10" height="2" viewBox="0 0 10 2" $after={20} $color="#e5cdd4" $sw="1"><path d="M.5 1h9" /></Svg>
            <Svg width="11" height="11" viewBox="0 0 11 11" $after={19} $color="#e5cdd4" $sw="1"><path d="M.5 2.500h7.500v7.500H.5zM2.500 2.500v-2h8v7.500h-2" /></Svg>
            <Svg width="11" height="11" viewBox="0 0 11 11" $color="#e5cdd4" $sw="1"><path d="M.5.5l10 10M10.500.5l-10 10" /></Svg>
          </TabStrip>
          <NavBar>
            <Gap $w={1} />
            <Svg width="15" height="12" viewBox="0 0 15 12" $after={21} $sw="1.500"><path d="M6 1L1 6l5 5M1 6h13" /></Svg>
            <Svg width="15" height="12" viewBox="0 0 15 12" $after={20} $color="#b15a70"><path d="M9 1l5 5-5 5M14 6H1" /></Svg>
            <Svg width="16" height="16" viewBox="0 0 16 16" $after={98} $sw="1.600"><path d="M12.800 4.200A6.200 6.200 0 1 0 14 9.500" /><path d="M14 2v4h-4z" fill="#fff" /></Svg>
            <UrlBox>
              <Svg width="16" height="16" viewBox="0 0 16 16" $after={12}><path d="M8 .8q3 1.800 6.500 2.200Q15 11 8 15.200 1 11 1.500 3 5 2.600 8 .8z" /></Svg>
              <Svg width="14" height="16" viewBox="0 0 14 16" $after={12}><rect x="1.200" y="7.200" width="11.600" height="8" rx="1.800" /><path d="M3.500 7V4.300a3.500 3.500 0 0 1 7 0V7" /></Svg>
              <Fit w={644}>https://user.<b>bigpro1.com</b>/#/user/process-history/detail/49192?dName=Heart Disease Binary</Fit>
              <Gap $w={38} />
              <Svg width="16" height="16" viewBox="0 0 16 16"><path d="M8 1l2.100 4.600 5 .5-3.700 3.400 1 5L8 12l-4.400 2.500 1-5L.9 6.100l5-.5z" /></Svg>
            </UrlBox>
            <Gap $w={98} />
            <Svg width="14" height="12" viewBox="0 0 14 12" $after={21}><path d="M2 1h10q1.200 0 1.200 1.200V5a6.200 6.200 0 0 1-12.400 0V2.200Q.8 1 2 1zM3.800 4.500L7 7.500l3.200-3" /></Svg>
            <svg width="16" height="16" viewBox="0 0 16 16"><circle cx="8" cy="8" r="8" fill="#fff" /><path d="M5 11.500V5.500L8 9l3-3.500v6" fill="none" stroke="#6c1a2c" strokeWidth="1.700" /></svg>
            <Gap $w={21} />
            <svg width="15" height="16" viewBox="0 0 15 16"><path d="M0 1h4v14H0z" fill="#5d6875" /><path d="M4 2h11v14H4z" fill="#5294bf" /><path d="M2 0h9v2H2z" fill="#f0bb3c" /><path d="M8 2h3v6L9.500 6.500 8 8z" fill="#d11b3a" /><path d="M3.500 2v14" stroke="#24344b" /></svg>
            <Gap $w={21} />
            <svg width="14" height="16" viewBox="0 0 14 16"><path d="M7 0l7 2.500Q14.500 12 7 16-.5 12 0 2.500z" fill="#f21313" /><rect x="4" y="7" width="6" height="4.500" fill="#fff" /><path d="M5.200 7V5q1.800-2.500 3.600 0v2" fill="none" stroke="#fff" strokeWidth="1.200" /><path d="M7 8.500v2" stroke="#f21313" /></svg>
            <Gap $w={21} />
            <svg width="16" height="16" viewBox="0 0 16 16" fill="none" stroke="#816052" strokeWidth="2.400"><path d="M2.500 11.500Q0 3.800 7 3.300M13.500 4.500Q16 12.200 9 12.700" /><path d="M7 0l4 3.300L7 6.600zM9 9.400v6.600L5 12.700z" fill="#816052" stroke="none" /></svg>
            <Gap $w={21} />
            <Svg width="14" height="16" viewBox="0 0 14 16" $after={23}><path d="M1 6.500h3.800V3.300a1.900 1.900 0 0 1 3.800 0v3.200H13v8.700H1v-3.500h1.700a1.500 1.500 0 0 0 0-3H1z" /></Svg>
            <Svg width="12" height="11" viewBox="0 0 12 11"><path d="M.5 1h11M.5 5.500h11M.5 10h11" /></Svg>
          </NavBar>
          <Bookmarks>
            {bookmarks.map(([icon, gap, label, w, after]) => (
              <Bookmark key={label} $gap={gap} $after={after}>{bookmarkIcons[icon]}<Fit w={w}>{label}</Fit></Bookmark>
            ))}
            <Svg width="14" height="12" viewBox="0 0 14 12" $after={14}><path d="M1 1l5 5-5 5M7.500 1l5 5-5 5" /></Svg>
            <Svg width="15" height="14" viewBox="0 0 15 14" $after={5}><path d="M1 2.500Q1 1 2.500 1H6l1.500 2h5Q14 3 14 4.500v7q0 1.500-1.500 1.500h-10Q1 13 1 11.500z" /></Svg>
            <Fit w={118}>Other Bookmarks</Fit>
          </Bookmarks>

          <Site>
            <SiteHeader>
              <Svg width="15" height="15" viewBox="0 0 15 15" $color="#959595" $sw="1"><path d="M4.500.5h-4v4M.8.8L5.500 5.500M10.500.5h4v4M14.200.8L9.500 5.500M4.500 14.500h-4v-4M.8 14.200L5.500 9.500M10.500 14.500h4v-4M14.200 14.200L9.500 9.500" /></Svg>
              <LangButton>
                <svg width="6" height="4" viewBox="0 0 6 4"><path d="M0 0h6L3 3.500z" /></svg>
                <Gap $w={7} />
                <Fit w={31} rtl>فارسی</Fit>
                <Gap $w={11} />
                <svg width="18" height="12" viewBox="0 0 18 12"><rect width="18" height="12" fill="#f7f7f7" /><path d="M0 0h18v4H0z" fill="#39a85a" /><path d="M0 8h18v4H0z" fill="#e52e23" /><path d="M9 4.500v3M7.500 5l1 2M10.500 5l-1 2" stroke="#e52e23" strokeWidth=".8" /></svg>
              </LangButton>
              <Logo><Fit w={68} rtl>بیگ پرو ۱</Fit></Logo>
              <Pill $w={143}><Fit w={101} rtl>ارتقای حساب کاربری</Fit></Pill>
              <User><Fit w={97} rtl><Latin>misam m</Latin> (برنزی)</Fit></User>
              <svg width="30" height="30" viewBox="0 0 30 30"><circle cx="15" cy="15" r="15" fill="#000" /><circle cx="15" cy="11" r="5" fill="#fff" /><path d="M5 23q2-6.500 10-6.500T25 23z" fill="#fff" /></svg>
              <Gap $w={41} />
              <Svg width="21" height="13" viewBox="0 0 21 13" $color="#888" $sw="1"><path d="M.5 1h11M.5 6.500h11M.5 12h11M16 1h4.500M16 6.500h4.500M16 12h4.500" /></Svg>
            </SiteHeader>
            <SiteBody>
              <Main>
                <Accordion $open $h={285} $after={51}>
                  <AccHead $open><Chevron up /><Fit w={118} rtl>شاخص‌های ارزیابی مدل</Fit></AccHead>
                  <Table>
                    {metrics.map(([k, kw, v, vw]) => (
                      <Row key={k}><Key><Fit w={kw}>{k}</Fit></Key><Value><Fit w={vw}>{v}</Fit></Value></Row>
                    ))}
                  </Table>
                </Accordion>
                <Accordion $h={53} $after={52}><AccHead><Chevron /><Fit w={76} rtl>مشخصات مدل</Fit></AccHead></Accordion>
                <Accordion $h={53} $after={52}><AccHead><Chevron /><Fit w={259} rtl>نمودار ماتریس درهم ریختگی <Latin>(Confusion Matrix)</Latin></Fit></AccHead></Accordion>
                <Accordion $h={53} $after={0}><AccHead><Chevron /><Fit w={59} rtl>نمودار <Latin>ROC</Latin></Fit></AccHead></Accordion>
              </Main>
              <Info>
                <InfoTitle $h={54} $pt={20}><Fit w={119} rtl>اطلاعات فایل:</Fit></InfoTitle>
                <Rule />
                <InfoLines rows={fileInfo} h={179} pt={2.5} />
                <Pill $w={250}><Fit w={129} rtl>آمار توصیفی مجموعه داده</Fit></Pill>
                <InfoSpace />
                <Rule />
                <InfoTitle $h={54} $pt={21}><Fit w={241} rtl>اطلاعات مدل و اعتبارسنجی:</Fit></InfoTitle>
                <Rule />
                <InfoLines rows={modelInfo} h={162} pt={3.5} />
                <Rule />
                <Pill $w={250} $m="21px 0 0"><Fit w={114} rtl>ایجاد سیستم تصمیم‌یار</Fit></Pill>
              </Info>
              <Side>
                {sideItems.map((s) => (
                  <SideItem key={s.icon} $top={s.top} $gap={s.gap} $h={s.h} $active={s.active}>
                    {sideIcons[s.icon]}
                    {s.lines.map(([t, w]) => <Fit key={t} w={w} rtl>{t}</Fit>)}
                    {s.active && <ActiveBar />}
                  </SideItem>
                ))}
              </Side>
            </SiteBody>
          </Site>
        </Browser>
      </Below>
    </Desktop>
  );
}
